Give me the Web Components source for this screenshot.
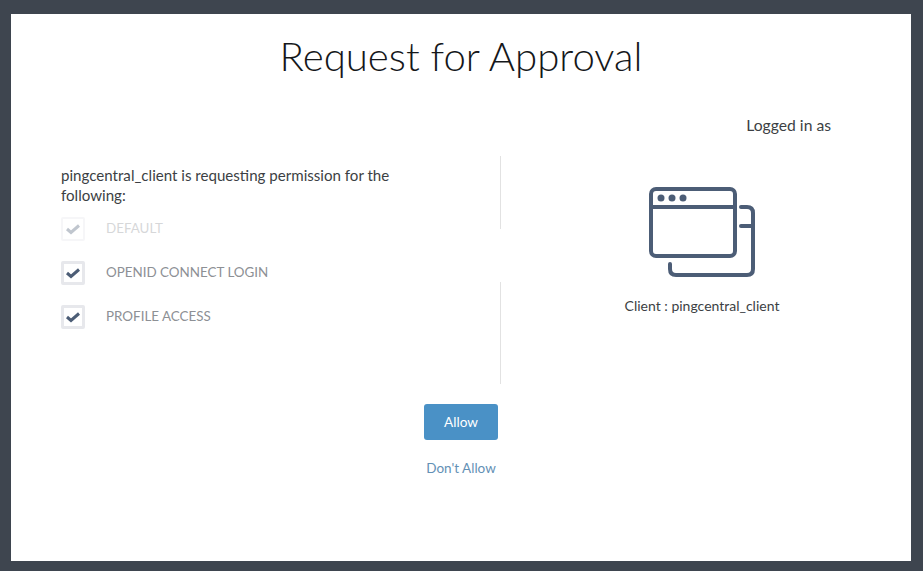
<!DOCTYPE html>
<html>
<head>
<meta charset="utf-8">
<title>Request for Approval</title>
<style>
  html, body { margin: 0; height: 100%; background: #3e454f; }
  body { font-family: Lato, "Open Sans", sans-serif; }
</style>
</head>
<body>
<approval-page>
  <scope-item slot="scopes" disabled>DEFAULT</scope-item>
  <scope-item slot="scopes">OPENID CONNECT LOGIN</scope-item>
  <scope-item slot="scopes">PROFILE ACCESS</scope-item>
</approval-page>
<script>
const Colors = {
    frame: '#3e454f',
    text: '#3c3f44',
    label: '#8d9095',
    slate: '#4c5d76',
    boxBorder: '#e7e8ec',
    rule: '#e2e2e2',
    button: '#4a91c6',
    link: '#6390b5',
};

class ScopeItem extends HTMLElement {
    constructor() {
        super();
        this.attachShadow({ mode: 'open' }).innerHTML = `
          <style>
            :host {
              display: flex;
              align-items: center;
              gap: 21px;
              height: 24px;
              margin-bottom: 20px;
              font-size: 13.4px;
              color: ${Colors.label};
            }
            :host([disabled]) { opacity: .35; }
            .box {
              box-sizing: border-box;
              width: 24px;
              height: 24px;
              border: 3px solid ${Colors.boxBorder};
              border-radius: 2px;
              display: flex;
              align-items: center;
              justify-content: center;
            }
            :host([disabled]) .box { border-width: 2px; }
            .name { padding-bottom: 3px; }
            svg { display: block; }
          </style>
          <span class="box">
            <svg width="14" height="12" viewBox="0 0 14 12">
              <path d="M1 6 L5 9.5 L13 2.5" fill="none" stroke="${Colors.slate}" stroke-width="3"/>
            </svg>
          </span>
          <span class="name"><slot></slot></span>`;
    }
}
customElements.define('scope-item', ScopeItem);

class ClientCard extends HTMLElement {
    constructor() {
        super();
        this.attachShadow({ mode: 'open' }).innerHTML = `
          <style>
            :host {
              display: flex;
              flex-direction: column;
              align-items: center;
              font-size: 14px;
              color: ${Colors.text};
            }
            svg { display: block; margin-bottom: 18px; }
            span { margin-right: 2px; }
          </style>
          <svg width="110" height="94" viewBox="648 185 110 94" fill="none" stroke="${Colors.slate}" stroke-width="4" stroke-linecap="round">
            <rect x="651" y="189" width="84" height="67" rx="5"/>
            <path d="M651 207 H735"/>
            <path d="M741 207 H747 Q753 207 753 213 V269 Q753 275 747 275 H676 Q670 275 670 269 V264"/>
            <path d="M741 226 H752"/>
            <g fill="${Colors.slate}" stroke="none">
              <circle cx="661" cy="198" r="3.5"/>
              <circle cx="672" cy="198" r="3.5"/>
              <circle cx="683" cy="198" r="3.5"/>
            </g>
          </svg>
          <span>Client : pingcentral_client</span>`;
    }
}
customElements.define('client-card', ClientCard);

class ApprovalPage extends HTMLElement {
    constructor() {
        super();
        this.attachShadow({ mode: 'open' }).innerHTML = `
          <style>
            :host {
              display: block;
              box-sizing: border-box;
              height: 571px;
              padding: 14px 12px 10px 11px;
              background: ${Colors.frame};
            }
            .panel {
              height: 100%;
              background: #fff;
              display: flex;
              flex-direction: column;
              color: ${Colors.text};
            }
            h1 {
              margin: 19px 0 0;
              height: 46px;
              line-height: 46px;
              text-align: center;
              font-size: 40.2px;
              font-weight: 300;
              color: #15171a;
            }
            .user {
              margin: 36px 80px 0 0;
              height: 20px;
              line-height: 20px;
              text-align: right;
              font-size: 15.7px;
            }
            .columns {
              display: flex;
              margin-top: 21px;
              height: 228px;
            }
            .scopes {
              box-sizing: border-box;
              width: 489px;
              padding: 9px 100px 0 50px;
            }
            p {
              margin: 0 0 12px;
              font-size: 15.1px;
              line-height: 20px;
            }
            .divider {
              width: 1px;
              display: flex;
              flex-direction: column;
              justify-content: space-between;
            }
            .divider i { display: block; width: 1px; background: ${Colors.rule}; }
            .divider i:first-child { height: 73px; }
            .divider i:last-child { height: 102px; }
            .client {
              flex: 1;
              padding-top: 29px;
              box-sizing: border-box;
              padding-right: 6px;
            }
            .actions {
              display: flex;
              flex-direction: column;
              align-items: center;
              margin-top: 20px;
            }
            button {
              width: 74px;
              height: 36px;
              border: 0;
              border-radius: 3px;
              padding: 0;
              background: ${Colors.button};
              color: #fff;
              font: inherit;
              font-size: 13.6px;
            }
            a {
              margin-top: 18px;
              line-height: 20px;
              font-size: 13.5px;
              color: ${Colors.link};
              text-decoration: none;
            }
          </style>
          <section class="panel">
            <h1>Request for Approval</h1>
            <div class="user">Logged in as</div>
            <div class="columns">
              <div class="scopes">
                <p>pingcentral_client is requesting permission for the following:</p>
                <slot name="scopes"></slot>
              </div>
              <div class="divider"><i></i><i></i></div>
              <div class="client"><client-card></client-card></div>
            </div>
            <div class="actions">
              <button type="button">Allow</button>
              <a href="#">Don't Allow</a>
            </div>
          </section>`;
    }
}
customElements.define('approval-page', ApprovalPage);
</script>
</body>
</html>
